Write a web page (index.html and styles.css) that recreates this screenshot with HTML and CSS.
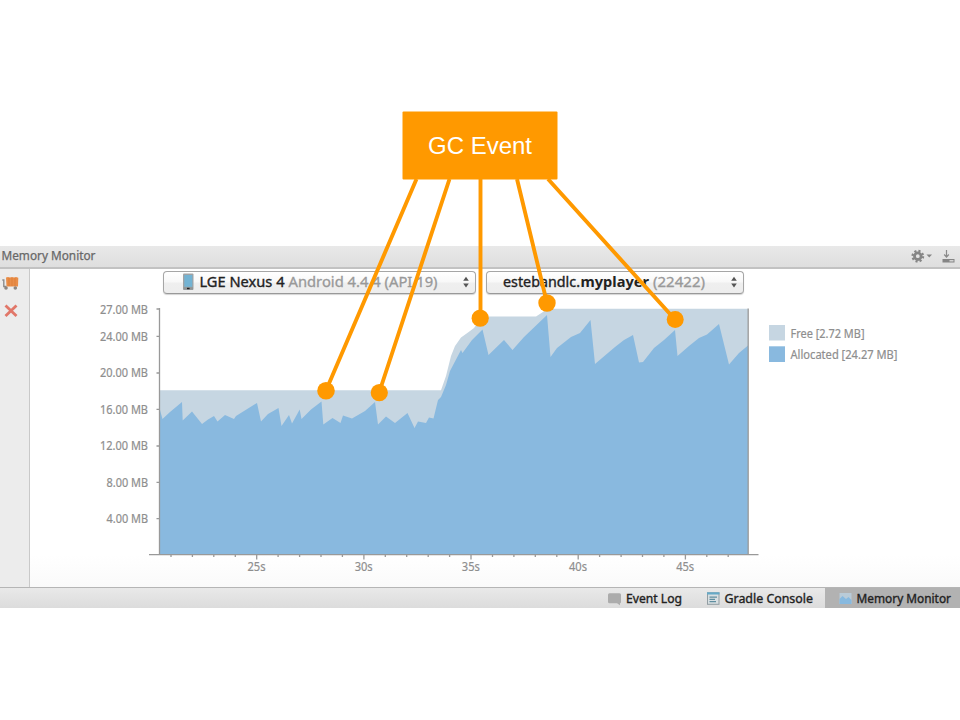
FILE: index.html
```html
<!DOCTYPE html>
<html lang="en">
<head>
<meta charset="utf-8">
<title>Memory Monitor</title>
<link rel="stylesheet" href="styles.css">
</head>
<body>
<main class="slide">
  <section class="monitor">
    <header class="titlebar">
      <svg class="title" width="100" height="22"><text x="1.5" y="14" textLength="94" lengthAdjust="spacingAndGlyphs">Memory Monitor</text></svg>
      <svg class="tools" width="50" height="21" viewBox="910 246 50 21">
        <g fill="none" stroke="#858585">
          <circle cx="917.8" cy="256.2" r="3.3" stroke-width="2.8"/>
          <circle cx="917.8" cy="256.2" r="5.3" stroke-width="2.2" stroke-dasharray="2.1 2.063"/>
        </g>
        <path d="M926.5 254.5h5.5l-2.75 3z" fill="#858585"/>
        <path d="M946.5 250v6.5M944.2 254.5l2.3 2.5 2.3-2.5" fill="none" stroke="#8a8a8a" stroke-width="1.2"/>
        <path d="M942.5 259h12v3.5h-12z" fill="#858585"/><path d="M949.5 260.2h4v1.2h-4z" fill="#e8e8e8"/>
      </svg>
    </header>
    <div class="body">
      <aside class="sidebar">
        <svg width="29" height="56" viewBox="0 269 29 56">
          <path d="M2.3 280h1.5v6.5h2.5" fill="none" stroke="#8c8c8c" stroke-width="1.4"/>
          <path d="M6 277.6l2-.6 2 .6 2-.6 2 .6 2-.6 2.3.8-.3 8.7h-11.5z" fill="#e98d48"/>
          <path d="M9 278v8M12 278v8M15 278v8" stroke="#d9772f" stroke-width=".6"/>
          <circle cx="6" cy="288" r="1.8" fill="#8c8580"/><circle cx="15.3" cy="288" r="1.8" fill="#8c8580"/>
          <path d="M5.5 305.5l11 10.5M16.5 305.5l-11 10.5" stroke="#e17769" stroke-width="2.8"/>
        </svg>
      </aside>
      <div class="content">
        <div class="selectors">
          <div class="select device">
            <svg width="311" height="20" viewBox="164 272 311 20">
              <rect x="183" y="273.5" width="10.5" height="16.5" rx="1" fill="#a0a3a5"/>
              <rect x="184.3" y="275" width="8" height="11.8" fill="#73b3d3"/>
              <path d="M183.5 287.3h9.5v2.3h-9.5z" fill="#8f9496"/><path d="M187 287.8h2.6v1.4H187z" fill="#222"/>
              <text class="strong" x="199.5" y="286.8" textLength="85" lengthAdjust="spacingAndGlyphs">LGE Nexus 4</text>
              <text class="muted" x="288.5" y="286.8" textLength="149" lengthAdjust="spacingAndGlyphs">Android 4.4.4 (API 19)</text>
              <path d="M463.2 280.7l2.8-4 2.8 4zM463.2 283.6l2.8 4 2.8-4z" fill="#555"/>
            </svg>
          </div>
          <div class="select process">
            <svg width="256" height="20" viewBox="487 272 256 20">
              <text class="strong" x="503" y="286.8" textLength="77" lengthAdjust="spacingAndGlyphs">estebandlc.</text>
              <text class="bold" x="580.5" y="286.8" textLength="68.5" lengthAdjust="spacingAndGlyphs">myplayer</text>
              <text class="muted" x="653" y="286.8" textLength="52" lengthAdjust="spacingAndGlyphs">(22422)</text>
              <path d="M731.2 280.7l2.8-4 2.8 4zM731.2 283.6l2.8 4 2.8-4z" fill="#555"/>
            </svg>
          </div>
        </div>
        <svg class="chart" width="930" height="292" viewBox="30 295 930 292">
          <path class="free" d="M160 555V390.3H441L446 376L451 356L455 346L461 337.5L468 332.5L474 328L482 316.6H536L548 308.7H748V555z"/>
          <path class="allocated" d="M160 555V410L162.5 419L170 412L182 402L182.7 420.5L192 411.5L202 424L208 419.5L214 416L217.5 421.5L225 415L234 419L236 416L257 403L261 421.5L268 414L278.5 408L281.5 426L289 415L292 423.5L299.7 409.5L301.5 419L311 409.5L321.5 401.5L323.3 424.5L332.5 418L340.5 423L343 415.5L352 418.5L365 411L375 402L378 424.5L386 416.5L395 423L407.5 413L414.5 428L418 421.5L426 423L429 417.5L433.5 418.5L438 400L441 397L446 385L450 371L461 350L462.5 353L472 340L482.5 329.5L488.5 355L504 340L512.5 350L524 337L547 315L550.5 357L557 348L571 337L580 333L590.5 320L595 364L615 347L624 340L633 335L639 362.5L643 362L654 348L664 340L675 330L677.5 356L689 346L699 338L707 334.5L719 324L729 364.5L739 353L748 345.5V555z"/>
          <path class="axis" d="M159.5 308V555M748.2 308.5V555M149 554.7H758.5M156.5 309H160M156.5 336.4H160M156.5 373H160M156.5 409.3H160M156.5 446H160M156.5 482.4H160M156.5 518.6H160"/>
          <path class="axis" d="M171 555v2M192.4 555v2M213.8 555v2M235.3 555v2M256.7 555v4.5M278.1 555v2M299.6 555v2M321 555v2M342.4 555v2M363.9 555v4.5M385.3 555v2M406.7 555v2M428.2 555v2M449.6 555v2M471 555v4.5M492.5 555v2M513.9 555v2M535.3 555v2M556.8 555v2M578.2 555v4.5M599.6 555v2M621.1 555v2M642.5 555v2M663.9 555v2M685.4 555v4.5M706.8 555v2M728.2 555v2"/>
          <g class="label">
            <text x="100" y="313.5" textLength="48" lengthAdjust="spacingAndGlyphs">27.00 MB</text>
            <text x="100" y="340.5" textLength="48" lengthAdjust="spacingAndGlyphs">24.00 MB</text>
            <text x="100" y="377" textLength="48" lengthAdjust="spacingAndGlyphs">20.00 MB</text>
            <text x="100" y="413.5" textLength="48" lengthAdjust="spacingAndGlyphs">16.00 MB</text>
            <text x="100" y="450" textLength="48" lengthAdjust="spacingAndGlyphs">12.00 MB</text>
            <text x="106.5" y="486.5" textLength="41.5" lengthAdjust="spacingAndGlyphs">8.00 MB</text>
            <text x="106.5" y="523" textLength="41.5" lengthAdjust="spacingAndGlyphs">4.00 MB</text>
            <text x="247.5" y="570.5" textLength="18" lengthAdjust="spacingAndGlyphs">25s</text>
            <text x="354.7" y="570.5" textLength="18" lengthAdjust="spacingAndGlyphs">30s</text>
            <text x="461.8" y="570.5" textLength="18" lengthAdjust="spacingAndGlyphs">35s</text>
            <text x="569" y="570.5" textLength="18" lengthAdjust="spacingAndGlyphs">40s</text>
            <text x="676.2" y="570.5" textLength="18" lengthAdjust="spacingAndGlyphs">45s</text>
            <text x="790.5" y="337.5" textLength="74" lengthAdjust="spacingAndGlyphs">Free [2.72 MB]</text>
            <text x="790.5" y="359" textLength="107" lengthAdjust="spacingAndGlyphs">Allocated [24.27 MB]</text>
          </g>
          <rect class="free" x="769" y="325" width="16" height="15.5"/>
          <rect class="allocated" x="769" y="346.3" width="16" height="15.7"/>
        </svg>
      </div>
    </div>
    <footer class="statusbar">
      <div class="tab">
        <svg width="225" height="20" viewBox="600 588 225 20">
          <path d="M609.5 593.3h10q1.5 0 1.5 1.5v7q0 1.5-1 1.5v2l-3-2h-7.5q-1.5 0-1.5-1.5v-7q0-1.5 1.5-1.5z" fill="#acacac"/>
          <text x="626" y="602.7" textLength="56" lengthAdjust="spacingAndGlyphs">Event Log</text>
          <rect x="707.5" y="592.8" width="11.5" height="11.5" fill="#d8dfe2" stroke="#929da2"/>
          <path d="M707 592.3h12.5v2.2H707z" fill="#65a9c7"/>
          <path d="M709.5 597.2h7.5M709.5 599.4h5.5M709.5 601.6h6.5" stroke="#5f8ea0" stroke-width="1.2"/>
          <text x="724.5" y="602.7" textLength="88.5" lengthAdjust="spacingAndGlyphs">Gradle Console</text>
        </svg>
      </div>
      <div class="tab active">
        <svg width="135" height="20" viewBox="825 588 135 20">
          <path d="M839.5 593h12v11h-12z" fill="#b9cbd8"/><path d="M839.5 604v-5l3-3 3.5 3 2.5-2 3 3v4z" fill="#87b9df"/>
          <text x="856.5" y="602.7" textLength="94.5" lengthAdjust="spacingAndGlyphs">Memory Monitor</text>
        </svg>
      </div>
    </footer>
  </section>
  <svg class="annotation" width="960" height="720" viewBox="0 0 960 720">
    <path d="M416.5 179L326 390.5M449.5 179L379 393M480.5 179V318M517 179L547 303M548 179L675 319.5" fill="none" stroke="#ff9900" stroke-width="3.9"/>
    <g fill="#ff9900"><circle cx="326" cy="390.7" r="8.8"/><circle cx="379.3" cy="392.7" r="8.6"/><circle cx="480.2" cy="318.2" r="8.6"/><circle cx="547" cy="303" r="8.7"/><circle cx="675.2" cy="319.5" r="8.5"/></g>
    <rect x="402.5" y="111.5" width="155" height="68" rx="1" fill="#ff9900"/>
    <text x="428" y="153.8" textLength="104" lengthAdjust="spacing">GC Event</text>
  </svg>
</main>
</body>
</html>
```
FILE: styles.css
```css
* { box-sizing: border-box; }
body { margin: 0; background: #fff; font-family: "Noto Sans", "Open Sans", sans-serif; }
svg { display: block; }
.slide { position: relative; width: 960px; height: 720px; padding-top: 246px; overflow: hidden; }
.monitor { width: 960px; height: 362px; display: flex; flex-direction: column; }
.titlebar { height: 23px; display: flex; justify-content: space-between; background: linear-gradient(#e9e9e9, #dedede); border-bottom: 2px solid #c2c2c2; }
.title text { font-size: 12px; fill: #686868; stroke: #686868; stroke-width: .25px; }
.body { flex: 1; display: flex; }
.sidebar { width: 30px; background: #ececec; border-right: 1px solid #c9c9c9; }
.content { width: 930px; background: linear-gradient(#fff 90%, #fafafa); }
.selectors { display: flex; gap: 10px; height: 26px; padding: 2px 0 0 133px; }
.select { height: 23px; border: 1px solid #a6a6a6; border-bottom-color: #999; border-radius: 4px; background: linear-gradient(#fff 0%, #f8f8f8 48%, #efefef 52%, #ededed 100%); box-shadow: 0 1px 1px #d4d4d4; }
.device { width: 313px; }
.process { width: 258px; }
.select text { font-size: 14px; }
.select .strong { fill: #222; stroke: #222; stroke-width: .35px; }
.select .bold { fill: #222; font-weight: 700; }
.select .muted { fill: #999; stroke: #999; stroke-width: .3px; }
.free { fill: #c6d6e2; }
.allocated { fill: #89b9df; }
.axis { fill: none; stroke: #999; stroke-width: 1.3px; }
.label text { font-size: 11.8px; fill: #8e8e8e; stroke: #8e8e8e; stroke-width: .2px; }
.statusbar { height: 21px; display: flex; justify-content: flex-end; border-top: 1px solid #b5b5b5; background: linear-gradient(#e9e9e9, #dcdcdc); }
.tab text { font-size: 12px; fill: #222; stroke: #222; stroke-width: .35px; }
.active { background: #b2b2b2; }
.annotation { position: absolute; inset: 0; }
.annotation text { font-family: "Liberation Sans", sans-serif; font-size: 24px; fill: #fff; }
```
